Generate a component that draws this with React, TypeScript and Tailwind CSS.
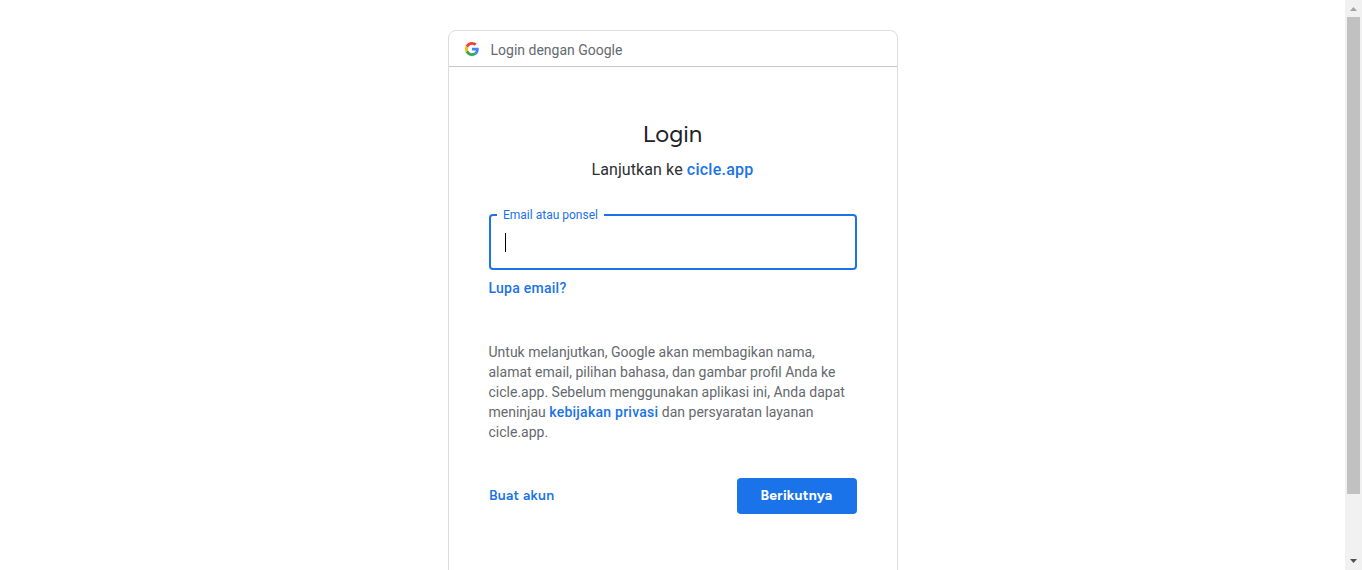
export default function App() {
  return (
    <div className="flex h-[570px] w-[1362px] overflow-hidden bg-white font-[Roboto,'Liberation_Sans',sans-serif] text-[#202124]">
      <main className="flex flex-1 justify-center pt-[30px]">
        <section className="h-[580px] w-[450px] shrink-0 rounded-lg border border-[#dadce0]">
          <header className="flex h-9 items-center gap-3 border-b border-[#c4c7cc] pl-4">
            <svg viewBox="0 0 48 48" className="h-[14px] w-[14px]" aria-hidden="true">
              <path fill="#EA4335" d="M24 9.5c3.54 0 6.71 1.22 9.21 3.6l6.85-6.85C35.9 2.38 30.47 0 24 0 14.62 0 6.51 5.38 2.56 13.22l7.98 6.19C12.43 13.72 17.74 9.5 24 9.5z" />
              <path fill="#4285F4" d="M46.98 24.55c0-1.57-.15-3.09-.38-4.55H24v9.02h12.94c-.58 2.96-2.26 5.48-4.78 7.18l7.73 6c4.51-4.18 7.09-10.36 7.09-17.65z" />
              <path fill="#FBBC05" d="M10.53 28.59c-.48-1.45-.76-2.99-.76-4.59s.27-3.14.76-4.59l-7.98-6.19C.92 16.46 0 20.12 0 24c0 3.88.92 7.54 2.56 10.78l7.97-6.19z" />
              <path fill="#34A853" d="M24 48c6.48 0 11.93-2.13 15.89-5.81l-7.73-6c-2.15 1.45-4.92 2.3-8.16 2.3-6.26 0-11.57-4.22-13.47-9.91l-7.98 6.19C6.51 42.62 14.62 48 24 48z" />
            </svg>
            <span className="pt-[2px] text-sm leading-5 text-[#65696e]">Login dengan Google</span>
          </header>
          <div className="flex flex-col px-10 pt-[51px]">
            <h1 className="text-center font-[Figtree,Lato,sans-serif] text-2xl leading-8">Login</h1>
            <p className="pt-2 text-center text-base leading-6 tracking-[0.1px] text-[#2d2e31]">
              Lanjutkan ke <a className="font-medium tracking-[0.25px] text-[#1a73e8]">cicle.app</a>
            </p>
            <div className="relative mt-8 flex h-14 items-center rounded border-2 border-[#1a73e8] pl-[14px]">
              <label className="absolute -top-[9px] left-[6px] bg-white px-[6.5px] text-xs leading-4 text-[#1a73e8]">Email atau ponsel</label>
              <span className="mt-px h-[19px] w-px bg-black" />
            </div>
            <a className="mt-2 text-sm leading-5 font-medium tracking-[0.25px] text-[#1a73e8]">Lupa email?</a>
            <p className="mt-11 w-[368px] text-sm leading-5 text-[#65696e]">
              Untuk melanjutkan, Google akan membagikan nama,<br />
              alamat email, pilihan bahasa, dan gambar profil Anda ke<br />
              cicle.app. Sebelum menggunakan aplikasi ini, Anda dapat<br />
              meninjau <a className="font-medium tracking-[0.25px] text-[#1a73e8]">kebijakan privasi</a> dan persyaratan layanan<br />
              cicle.app.
            </p>
            <div className="mt-9 flex items-center justify-between">
              <button className="pl-[0.5px] font-[Figtree,Lato,sans-serif] text-sm leading-5 font-semibold tracking-[0.25px] text-[#1a73e8]">Buat akun</button>
              <button className="h-9 w-[120px] rounded bg-[#1a73e8] font-[Figtree,Lato,sans-serif] text-sm leading-5 font-bold tracking-[0.25px] text-white">Berikutnya</button>
            </div>
          </div>
        </section>
      </main>
      <aside className="flex w-[17px] flex-col items-center bg-[#f1f1f1]">
        <svg viewBox="0 0 17 17" className="h-[17px] w-[17px]"><path fill="#a3a3a3" d="M5 11h7L8.500 7z" /></svg>
        <div className="h-[477px] w-[13px] bg-[#c1c1c1]" />
        <svg viewBox="0 0 17 17" className="mt-auto h-[17px] w-[17px]"><path fill="#505050" d="M5 6h7l-3.500 4z" /></svg>
      </aside>
    </div>
  );
}
